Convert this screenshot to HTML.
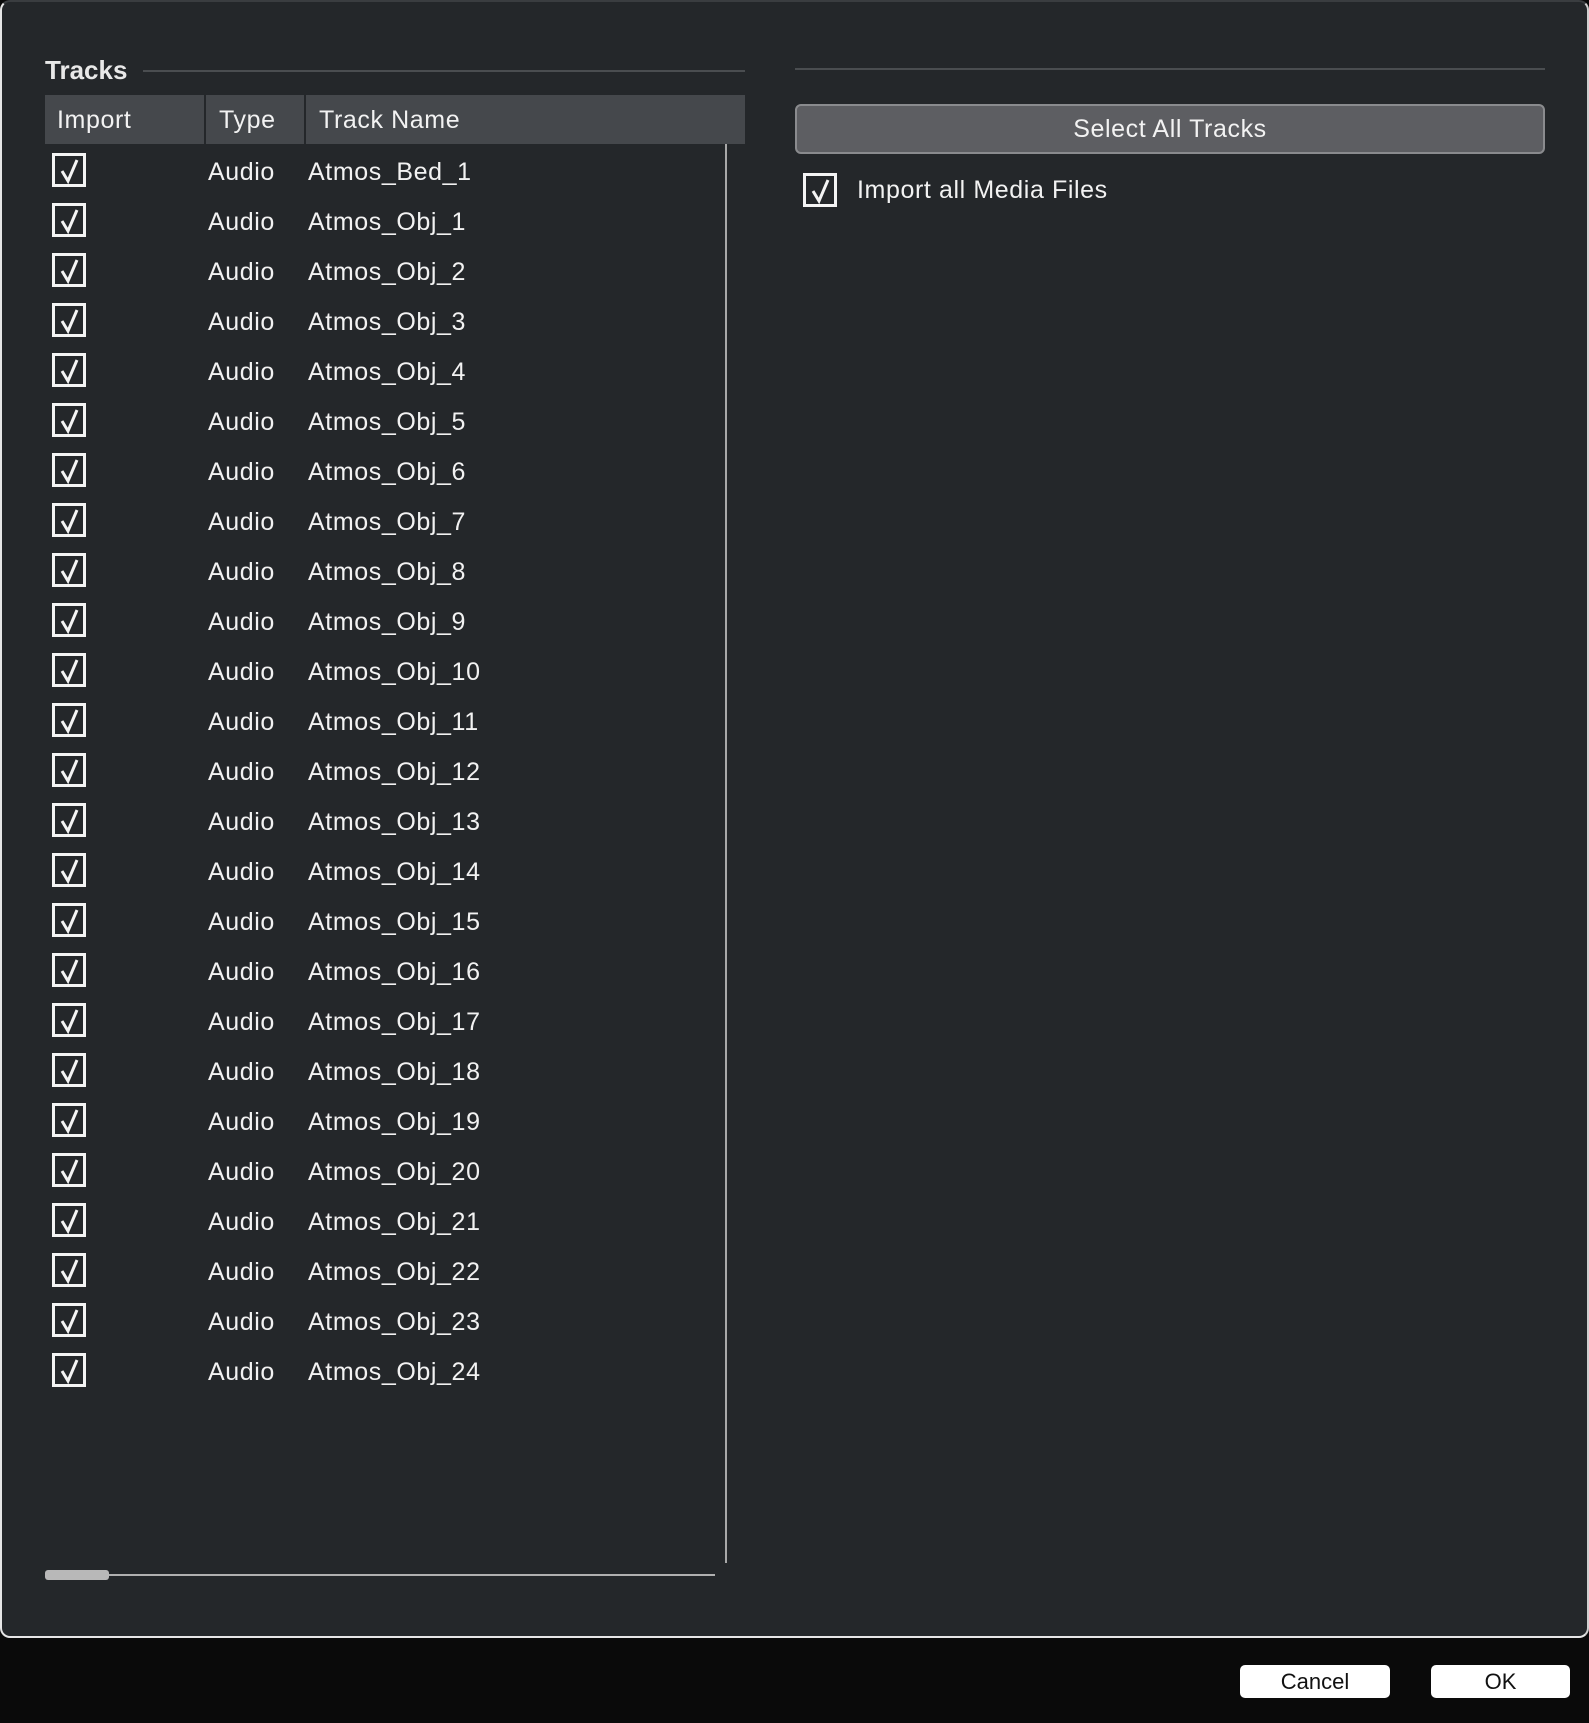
<!DOCTYPE html>
<html><head><meta charset="utf-8"><style>
html,body{margin:0;padding:0;width:1589px;height:1723px;background:#0a0a0a;overflow:hidden;font-family:"Liberation Sans",sans-serif;}
#panel{position:absolute;left:0;top:0;width:1585px;height:1634px;background:#24272a;border:2px solid #e6e6e6;border-top-color:#3a3d40;border-right-color:#d0d0d0;border-radius:10px;}
.abs{position:absolute;}
.t{position:absolute;color:#f2f2f2;font-size:25px;letter-spacing:0.6px;line-height:28px;white-space:nowrap;}
.cb{position:absolute;width:28px;height:28px;border:3px solid #f4f4f4;background:#24272a;}
.cb svg{position:absolute;left:2px;top:1px;}
.btn{position:absolute;background:#fff;border-radius:5px;color:#111;font-size:22px;text-align:center;line-height:33px;}
</style></head><body>
<div id="panel"></div>
<div class="t" style="left:45px;top:56px;font-weight:bold;color:#e8e8e8;font-size:26px;letter-spacing:0;">Tracks</div>
<div class="abs" style="left:143px;top:70px;width:602px;height:2px;background:#4a4d50"></div>
<div class="abs" style="left:45px;top:95px;width:700px;height:49px;background:#45484c"></div>
<div class="abs" style="left:204px;top:95px;width:2px;height:49px;background:#24272a"></div>
<div class="abs" style="left:304px;top:95px;width:2px;height:49px;background:#24272a"></div>
<div class="t" style="left:57px;top:106px;">Import</div>
<div class="t" style="left:219px;top:106px;">Type</div>
<div class="t" style="left:319px;top:106px;">Track Name</div>
<div class="abs" style="left:725px;top:144px;width:2px;height:1419px;background:#a8a8a8"></div>
<div class="abs" style="left:45px;top:1574px;width:670px;height:2px;background:#b0b0b0"></div>
<div class="abs" style="left:45px;top:1570px;width:64px;height:10px;background:#b8b8b8;border-radius:3px"></div>
<div id="rows"></div>
<div class="abs" style="left:795px;top:68px;width:750px;height:2px;background:#4a4d50"></div>
<div class="abs" style="left:795px;top:104px;width:746px;height:46px;background:#5d5e62;border:2px solid #8a8b8e;border-radius:6px;"></div>
<div class="t" style="left:795px;top:115px;width:750px;text-align:center;">Select All Tracks</div>
<div class="cb" style="left:803px;top:173px;"><svg width="26" height="28" viewBox="0 0 26 28"><path d="M5 14 L11 24 L20 3" fill="none" stroke="#f4f4f4" stroke-width="3"/></svg></div>
<div class="t" style="left:857px;top:176px;">Import all Media Files</div>
<div class="btn" style="left:1240px;top:1665px;width:150px;height:33px;">Cancel</div>
<div class="btn" style="left:1431px;top:1665px;width:139px;height:33px;">OK</div>
<script>
var names=["Atmos_Bed_1"];for(var i=1;i<=24;i++)names.push("Atmos_Obj_"+i);
var h="";for(var i=0;i<25;i++){var c=170+50*i;
h+='<div class="cb" style="left:52px;top:'+(c-17)+'px;"><svg width="26" height="28" viewBox="0 0 26 28"><path d="M5 14 L11 24 L20 3" fill="none" stroke="#f4f4f4" stroke-width="3"/></svg></div>';
h+='<div class="t" style="left:208px;top:'+(c-12)+'px;">Audio</div>';
h+='<div class="t" style="left:308px;top:'+(c-12)+'px;">'+names[i]+'</div>';}
document.getElementById("rows").innerHTML=h;
</script>
</body></html>
